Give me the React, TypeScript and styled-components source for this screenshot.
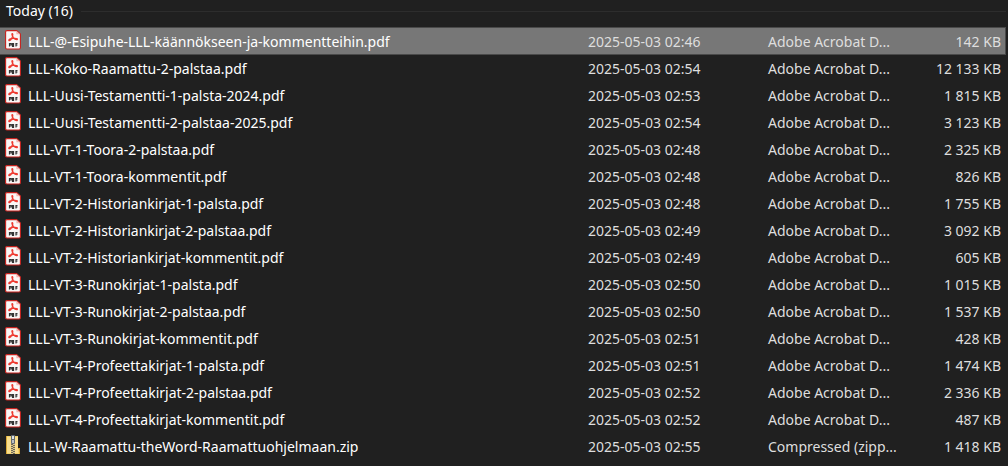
import React from 'react';
import styled, { createGlobalStyle } from 'styled-components';

const GlobalStyle = createGlobalStyle`
  * { box-sizing: border-box; }
  html { background: #202020; }
  body {
    margin: 0;
    background: #202020;
    color: #ffffff;
    font-family: "Noto Sans", "Open Sans", sans-serif;
    font-size: 14px;
    line-height: 20px;
  }
`;

const Pane = styled.main`
  padding: 0 2px 4px 0;
`;

const GroupHeader = styled.header`
  display: flex;
  align-items: center;
  gap: 8px;
  height: 22px;
  margin-bottom: 6px;
  padding-left: 6px;
  &::after {
    content: '';
    flex: 1;
    height: 1px;
    background: #2d2d2d;
  }
`;

const GroupTitle = styled.h2`
  margin: 0;
  font-size: 14px;
  font-weight: 400;
`;

const FileTable = styled.table`
  width: 100%;
  table-layout: fixed;
  border-collapse: collapse;
`;

const Column = styled.col<{ $width?: number }>`
  width: ${(p) => (p.$width ? `${p.$width}px` : 'auto')};
`;

const Row = styled.tr<{ $selected: boolean }>`
  height: 27px;
  background: ${(p) => (p.$selected ? '#777777' : 'transparent')};
  box-shadow: ${(p) => (p.$selected ? 'inset -1px -1px #4a4a4a, 0 -1px #4a4a4a' : 'none')};
`;

const Cell = styled.td<{ $align?: 'right' }>`
  padding: ${(p) => (p.$align ? '0 5px 0 0' : '0')};
  color: #dedede;
  text-align: ${(p) => p.$align ?? 'left'};
  white-space: nowrap;
`;

const NameCell = styled.th`
  padding: 0 0 0 5px;
  font-weight: 400;
  text-align: left;
  white-space: nowrap;
`;

const FileLabel = styled.span`
  display: flex;
  align-items: center;
  gap: 7px;
`;

const Icon = styled.svg`
  flex: none;
  width: 16px;
  height: 20px;
  margin-bottom: 4px;
`;

const PdfIcon = () => (
  <Icon viewBox="0 0 16 20" aria-hidden="true">
    <path d="M2 .6h9.6L15.4 4v13.800q0 1.200-1.200 1.200H1.800q-1.200 0-1.200-1.200V1.800Q.6.6 2 .6z" fill="#faf7f6" stroke="#c5211d" strokeWidth="1.100" />
    <path d="M11.400.8V4.200h3.800z" fill="#f4b5b0" />
    <path
      d="M7.300 3.500c-1 .3 0 2.500 1 3.900 1.200 1.600 2.900 2.500 3.900 2.200 1-.6-.9-1.500-3.700-1.200-2.400.2-4.700 1-4.700 1.900 0 .9 1.700.3 2.900-1.900 1-1.800 1.600-4.900.6-4.900z"
      fill="none"
      stroke="#ee3a30"
      strokeWidth="1.200"
    />
    <path d="M4.500 16.500V13.500h1.700v1.500H4.500M7.500 13.500v3h1v-3zM11 16.500V13.500h1.500M11 15h1.500" fill="none" stroke="#333333" strokeWidth="1.200" />
  </Icon>
);

const ZipIcon = () => (
  <Icon viewBox="0 0 16 20" aria-hidden="true">
    <path d="M1 1h12v12h2v6H1z" fill="#f2d06b" />
    <path d="M1 1h1v18H1zM13 13h2v6h-1v-5h-1z" fill="#d9a936" />
    <path d="M2 2h4v16H2zM10 2h3v16h-3z" fill="#f9de8c" />
    <path d="M6 1h4v18H6z" fill="#d8c58a" />
    <path d="M7 9v10M9 10v9" fill="none" stroke="#4b4b48" strokeWidth="1.500" strokeDasharray="1 1" />
    <rect x="6" y="0" width="4" height="9" rx="1" fill="#626a70" />
    <rect x="7" y="1" width="2" height="3" fill="#dce1e5" />
    <rect x="7" y="5" width="2" height="3" fill="#b9bfc4" />
  </Icon>
);

type FileEntry = { name: string; time: string; size: string; selected?: boolean };

const files: FileEntry[] = [
  { name: 'LLL-@-Esipuhe-LLL-käännökseen-ja-kommentteihin.pdf', time: '02:46', size: '142', selected: true },
  { name: 'LLL-Koko-Raamattu-2-palstaa.pdf', time: '02:54', size: '12 133' },
  { name: 'LLL-Uusi-Testamentti-1-palsta-2024.pdf', time: '02:53', size: '1 815' },
  { name: 'LLL-Uusi-Testamentti-2-palstaa-2025.pdf', time: '02:54', size: '3 123' },
  { name: 'LLL-VT-1-Toora-2-palstaa.pdf', time: '02:48', size: '2 325' },
  { name: 'LLL-VT-1-Toora-kommentit.pdf', time: '02:48', size: '826' },
  { name: 'LLL-VT-2-Historiankirjat-1-palsta.pdf', time: '02:48', size: '1 755' },
  { name: 'LLL-VT-2-Historiankirjat-2-palstaa.pdf', time: '02:49', size: '3 092' },
  { name: 'LLL-VT-2-Historiankirjat-kommentit.pdf', time: '02:49', size: '605' },
  { name: 'LLL-VT-3-Runokirjat-1-palsta.pdf', time: '02:50', size: '1 015' },
  { name: 'LLL-VT-3-Runokirjat-2-palstaa.pdf', time: '02:50', size: '1 537' },
  { name: 'LLL-VT-3-Runokirjat-kommentit.pdf', time: '02:51', size: '428' },
  { name: 'LLL-VT-4-Profeettakirjat-1-palsta.pdf', time: '02:51', size: '1 474' },
  { name: 'LLL-VT-4-Profeettakirjat-2-palstaa.pdf', time: '02:52', size: '2 336' },
  { name: 'LLL-VT-4-Profeettakirjat-kommentit.pdf', time: '02:52', size: '487' },
  { name: 'LLL-W-Raamattu-theWord-Raamattuohjelmaan.zip', time: '02:55', size: '1 418' },
];

export default function App() {
  return (
    <>
      <GlobalStyle />
      <Pane>
        <GroupHeader>
          <GroupTitle>Today ({files.length})</GroupTitle>
        </GroupHeader>
        <FileTable aria-label="Files">
          <colgroup>
            <Column />
            <Column $width={180} />
            <Column $width={140} />
            <Column $width={98} />
          </colgroup>
          <tbody>
            {files.map((file) => {
              const zipped = file.name.endsWith('.zip');
              return (
                <Row key={file.name} $selected={!!file.selected} aria-selected={!!file.selected}>
                  <NameCell scope="row">
                    <FileLabel>
                      {zipped ? <ZipIcon /> : <PdfIcon />}
                      {file.name}
                    </FileLabel>
                  </NameCell>
                  <Cell>2025-05-03 {file.time}</Cell>
                  <Cell>{zipped ? 'Compressed (zipp...' : 'Adobe Acrobat D...'}</Cell>
                  <Cell $align="right">{file.size} KB</Cell>
                </Row>
              );
            })}
          </tbody>
        </FileTable>
      </Pane>
    </>
  );
}
